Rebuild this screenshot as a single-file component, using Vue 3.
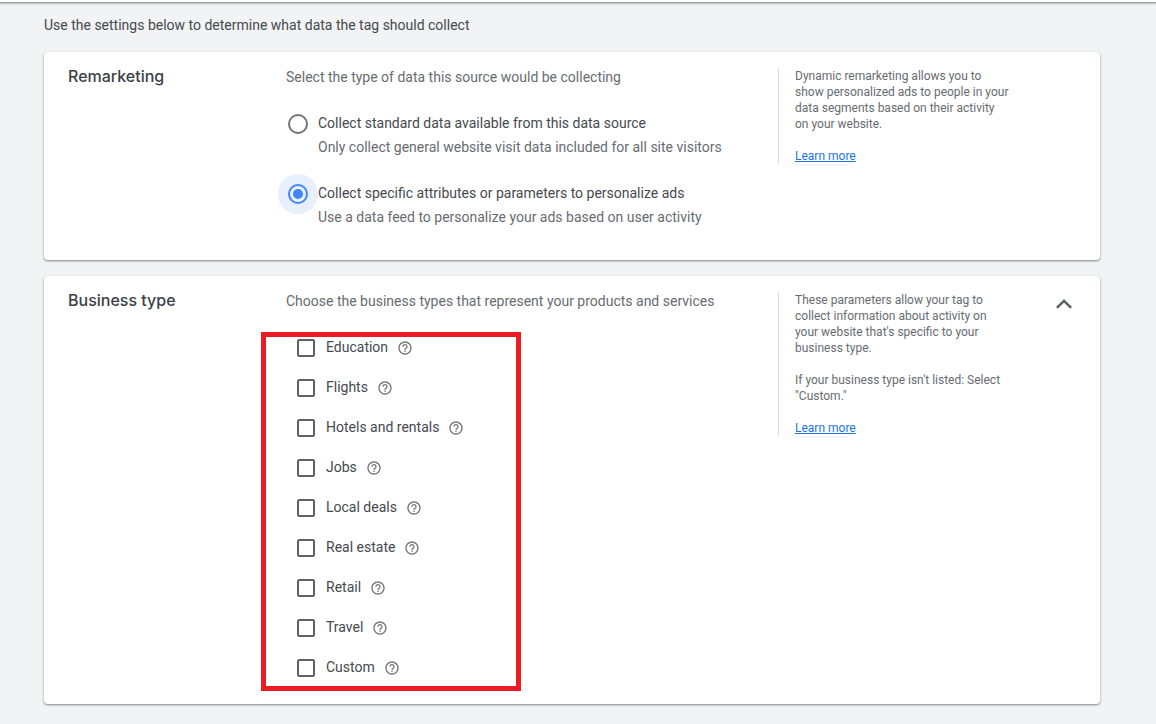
<script setup>
import { ref } from 'vue';

const dataType = ref('specific');
const expanded = ref(true);
const selected = ref([]);

const dataOptions = [
  {
    id: 'standard',
    label: 'Collect standard data available from this data source',
    hint: 'Only collect general website visit data included for all site visitors'
  },
  {
    id: 'specific',
    label: 'Collect specific attributes or parameters to personalize ads',
    hint: 'Use a data feed to personalize your ads based on user activity'
  }
];

const businessTypes = [
  'Education',
  'Flights',
  'Hotels and rentals',
  'Jobs',
  'Local deals',
  'Real estate',
  'Retail',
  'Travel',
  'Custom'
];

// Line breaks are kept by white-space: pre-line
const remarketingHelp =
  'Dynamic remarketing allows you to\nshow personalized ads to people in your\ndata segments based on their activity\non your website.';
const businessHelp =
  "These parameters allow your tag to\ncollect information about activity on\nyour website that's specific to your\nbusiness type.";
const customHelp = "If your business type isn't listed: Select\n\"Custom.\"";
</script>

<template>
  <div class="page">
    <div class="top-edge"></div>
    <main class="content">
      <p class="intro">Use the settings below to determine what data the tag should collect</p>

      <section class="card">
        <h2 class="card-title">Remarketing</h2>
        <div class="card-body">
          <p class="lead">Select the type of data this source would be collecting</p>
          <div class="radio-list">
            <div v-for="option in dataOptions" :key="option.id" class="radio-row">
              <input
                :id="option.id"
                v-model="dataType"
                class="radio"
                type="radio"
                name="data-type"
                :value="option.id"
              />
              <label :for="option.id" class="radio-label">
                <span class="radio-text">{{ option.label }}</span>
                <span class="radio-hint">{{ option.hint }}</span>
              </label>
            </div>
          </div>
        </div>
        <aside class="help">
          <p>{{ remarketingHelp }}</p>
          <a href="#">Learn more</a>
        </aside>
        <div class="card-action"></div>
      </section>

      <section class="card">
        <h2 class="card-title">Business type</h2>
        <div class="card-body">
          <p class="lead">Choose the business types that represent your products and services</p>
          <div v-show="expanded" class="check-list">
            <div v-for="(type, i) in businessTypes" :key="type" class="check-row">
              <input :id="`type-${i}`" v-model="selected" class="checkbox" type="checkbox" :value="type" />
              <label :for="`type-${i}`">{{ type }}</label>
              <button class="icon-button help-button" type="button" :aria-label="`Help: ${type}`">
                <svg width="16" height="16" viewBox="0 0 24 24" fill="currentColor">
                  <path
                    d="M11 18h2v-2h-2v2zm1-16C6.48 2 2 6.48 2 12s4.48 10 10 10 10-4.48 10-10S17.52 2 12 2zm0 18c-4.41 0-8-3.59-8-8s3.59-8 8-8 8 3.59 8 8-3.59 8-8 8zm0-14c-2.21 0-4 1.79-4 4h2c0-1.1.9-2 2-2s2 .9 2 2c0 2-3 1.75-3 5h2c0-2.25 3-2.5 3-5 0-2.21-1.79-4-4-4z"
                  />
                </svg>
              </button>
            </div>
          </div>
        </div>
        <aside class="help">
          <p>{{ businessHelp }}</p>
          <p>{{ customHelp }}</p>
          <a href="#">Learn more</a>
        </aside>
        <div class="card-action">
          <button
            class="icon-button"
            type="button"
            aria-label="Business type"
            :aria-expanded="expanded"
            @click="expanded = !expanded"
          >
            <svg width="24" height="24" viewBox="0 0 24 24" fill="none" stroke="currentColor" stroke-width="2.5">
              <path d="M4.9 15.9 12 8.8l7.1 7.1" />
            </svg>
          </button>
        </div>
      </section>
    </main>
  </div>
</template>

<style>
body {
  margin: 0;
  background: #f1f3f4;
}
</style>

<style scoped>
.page {
  font-family: Roboto, 'Liberation Sans', sans-serif;
  font-size: 14px;
  color: #46494d;
}

.top-edge {
  height: 2px;
  background: #fff;
  border-bottom: 1px solid #999c9e;
  box-shadow: 0 1px 2px rgba(60, 64, 67, 0.3);
}

.content {
  display: flex;
  flex-direction: column;
  gap: 16px;
  padding: 13px 56px 20px 44px;
}

p,
h2 {
  margin: 0;
}

.intro {
  padding-bottom: 2px;
  line-height: 18px;
}

.card {
  display: flex;
  padding: 16px 24px;
  background: #fff;
  border-radius: 4px;
  box-shadow: 0 1px 2px rgba(60, 64, 67, 0.5), 0 1px 3px rgba(60, 64, 67, 0.15);
}

.card-title {
  flex: 0 0 218px;
  font-family: Inter, Roboto, sans-serif;
  font-size: 16px;
  font-weight: 500;
  line-height: 16px;
  color: #3c4043;
}

.card-body {
  flex: 1;
}

.lead {
  line-height: 18px;
  color: #686c71;
}

.radio-list {
  display: flex;
  flex-direction: column;
  gap: 22px;
  padding: 25px 0 15px;
}

.radio-row {
  display: flex;
  gap: 10px;
}

.radio {
  appearance: none;
  box-sizing: border-box;
  width: 20px;
  height: 20px;
  margin: 3px 0 0 2px;
  padding: 3px;
  border: 2px solid #757575;
  border-radius: 50%;
}

/* blue dot, with the ring around it in the halo colour */
.radio:checked {
  border-color: #4285f4;
  background: linear-gradient(#4285f4, #4285f4) content-box, #e8f0fe;
  box-shadow: 0 0 0 10px #e8f0fe;
}

.radio-label {
  position: relative;
  line-height: 24px;
}

.radio-text,
.radio-hint {
  display: block;
}

.radio-hint {
  color: #686c71;
}

.check-list {
  position: relative;
  padding-top: 18px;
}

/* highlight frame drawn over the list */
.check-list::after {
  content: '';
  position: absolute;
  top: 22px;
  bottom: -3px;
  left: -25px;
  box-sizing: border-box;
  width: 260px;
  border: 5px solid #ed1c24;
  pointer-events: none;
}

.check-row {
  display: flex;
  align-items: center;
  height: 40px;
  padding-left: 11px;
}

.check-row label {
  margin: 0 9px 0 11px;
  padding-bottom: 2px;
}

.checkbox {
  appearance: none;
  box-sizing: border-box;
  width: 18px;
  height: 18px;
  margin: 0;
  border: 2px solid #5f6368;
  border-radius: 2px;
}

.checkbox:checked {
  border-color: #4285f4;
  background: #4285f4;
}

.icon-button {
  display: flex;
  padding: 0;
  border: 0;
  background: none;
  color: #5f6368;
  cursor: pointer;
}

.help-button {
  color: #757575;
}

.help {
  align-self: flex-start;
  box-sizing: border-box;
  width: 242px;
  padding-left: 16px;
  border-left: 1px solid #dadce0;
  font-size: 12px;
  line-height: 16px;
  color: #686c71;
}

.help p {
  margin-bottom: 16px;
  white-space: pre-line;
}

.help a {
  display: block;
  color: #1a73e8;
}

.card-action {
  width: 24px;
  margin-left: 32px;
}
</style>
